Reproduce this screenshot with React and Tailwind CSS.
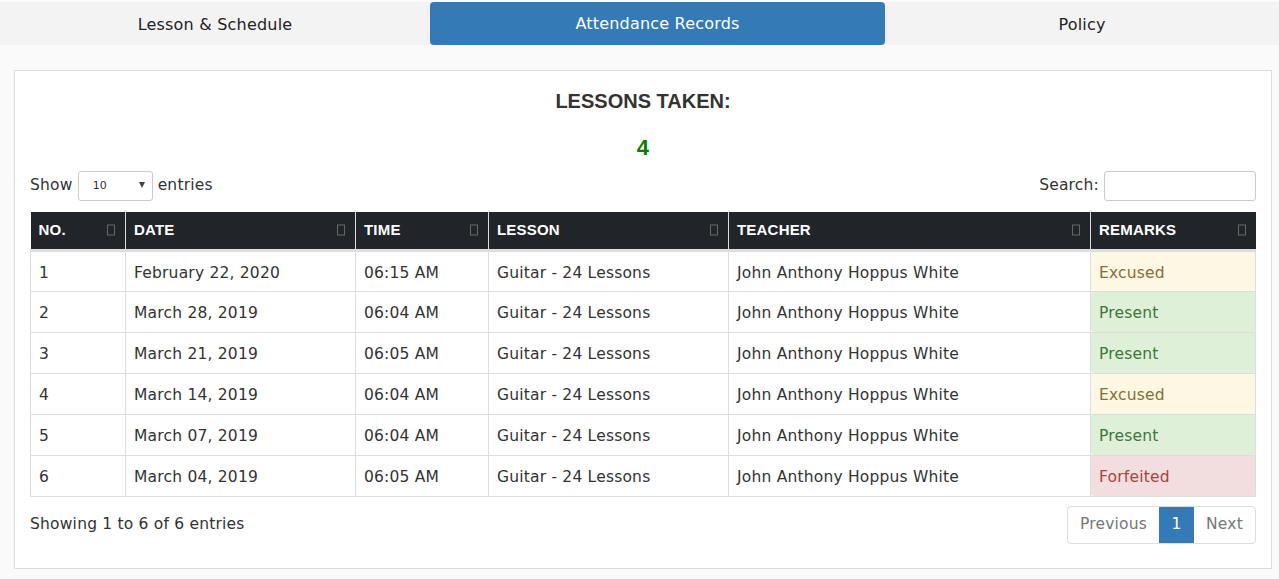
import React from 'react';

const rows = [
  { no: 1, date: 'February 22, 2020', time: '06:15 AM', remark: 'Excused' },
  { no: 2, date: 'March 28, 2019', time: '06:04 AM', remark: 'Present' },
  { no: 3, date: 'March 21, 2019', time: '06:05 AM', remark: 'Present' },
  { no: 4, date: 'March 14, 2019', time: '06:04 AM', remark: 'Excused' },
  { no: 5, date: 'March 07, 2019', time: '06:04 AM', remark: 'Present' },
  { no: 6, date: 'March 04, 2019', time: '06:05 AM', remark: 'Forfeited' },
];

const remarkClass = {
  Excused: 'bg-[#fcf8e3] text-[#8a6d3b]',
  Present: 'bg-[#dff0d8] text-[#3c763d]',
  Forfeited: 'bg-[#f2dede] text-[#a94442]',
};

const SortBox = () => (
  <span className="absolute right-[10px] top-1/2 -translate-y-1/2 w-[8px] h-[11px] border border-[#666]" />
);

const Th = ({ children, className = '' }) => (
  <th className={`relative text-left font-bold text-[15px] text-white px-[8px] border-r border-[#ddd] last:border-r-0 ${className}`} style={{ fontFamily: '"Liberation Sans", Arial, sans-serif' }}>
    {children}
    <SortBox />
  </th>
);

const td = 'border border-[#ddd] px-[8px] pt-[5px] align-middle';

export default function App() {
  return (
    <div className="min-h-[579px] bg-[#fafafa] text-[#333] pt-[2px] text-[15.5px] tracking-[0.2px]" style={{ fontFamily: '"DejaVu Sans", sans-serif' }}>
      <div className="flex h-[43px] bg-[#f3f3f3] text-[16px] text-[#222] pt-[2px]">
        <div className="w-[430px] flex items-center justify-center">Lesson &amp; Schedule</div>
        <div className="w-[455px] flex items-center justify-center bg-[#337ab7] text-white rounded-[4px] -mt-[2px]">Attendance Records</div>
        <div className="flex-1 flex items-center justify-center">Policy</div>
      </div>

      <div className="ml-[14px] mr-[7px] mt-[25px] bg-white border border-[#ddd] px-[15px] pb-[24px]">
        <h2 className="text-center font-bold text-[20px] text-[#333] pt-[19px] leading-[22px] tracking-normal" style={{ fontFamily: '"Liberation Sans", Arial, sans-serif' }}>
          LESSONS TAKEN:
        </h2>
        <div className="text-center font-bold text-[22px] text-[#008000] mt-[23px] leading-[26px]" style={{ fontFamily: '"Liberation Sans", Arial, sans-serif' }}>
          4
        </div>

        <div className="flex items-center justify-between mt-[10px] text-[#333]">
          <div className="flex items-center gap-[5px]">
            <span>Show</span>
            <div className="relative w-[75px] h-[30px] border border-[#ccc] rounded-[3px] flex items-center pl-[14px] text-[11px]">
              10
              <span className="absolute right-[7px] top-[10px] w-0 h-0 border-l-[3.5px] border-r-[3.5px] border-t-[6px] border-l-transparent border-r-transparent border-t-[#444]" />
            </div>
            <span>entries</span>
          </div>
          <div className="flex items-center gap-[5px]">
            <span>Search:</span>
            <input className="w-[152px] h-[30px] border border-[#ccc] rounded-[3px] outline-none" />
          </div>
        </div>

        <table className="w-full mt-[11px] border-collapse text-[#333]">
          <thead>
            <tr className="h-[38px] bg-[#212529] border-b-[3px] border-[#ddd]">
              <Th className="w-[95px]">NO.</Th>
              <Th className="w-[230px]">DATE</Th>
              <Th className="w-[133px]">TIME</Th>
              <Th className="w-[240px]">LESSON</Th>
              <Th className="w-[362px]">TEACHER</Th>
              <Th>REMARKS</Th>
            </tr>
          </thead>
          <tbody>
            {rows.map((r) => (
              <tr key={r.no} className="h-[41px]">
                <td className={td}>{r.no}</td>
                <td className={td}>{r.date}</td>
                <td className={td}>{r.time}</td>
                <td className={td}>Guitar - 24 Lessons</td>
                <td className={td}>John Anthony Hoppus White</td>
                <td className={`${td} rounded-[3px] ${remarkClass[r.remark]}`}>{r.remark}</td>
              </tr>
            ))}
          </tbody>
        </table>

        <div className="flex items-center justify-between mt-[9px]">
          <div className="text-[#333]">Showing 1 to 6 of 6 entries</div>
          <div className="flex h-[38px] border border-[#ddd] rounded-[4px] overflow-hidden text-[#777]">
            <span className="px-[12px] flex items-center">Previous</span>
            <span className="w-[35px] flex items-center justify-center bg-[#337ab7] text-white">1</span>
            <span className="px-[12px] flex items-center">Next</span>
          </div>
        </div>
      </div>
    </div>
  );
}
